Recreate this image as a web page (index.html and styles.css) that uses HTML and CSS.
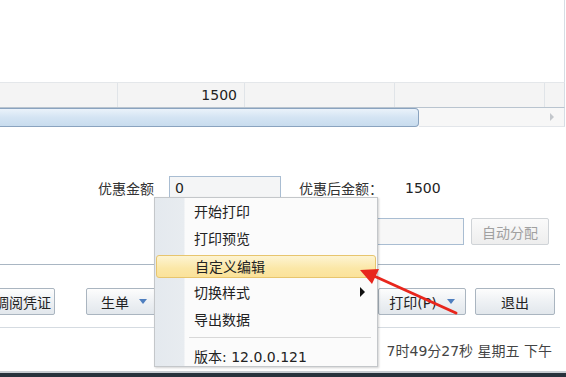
FILE: index.html
```html
<!DOCTYPE html>
<html>
<head>
<meta charset="utf-8">
<link rel="stylesheet" href="styles.css">
</head>
<body>
<div class="page">
  <div class="grid"></div>
  <div class="summary">
    <div class="cell c1"></div>
    <div class="cell c2">1500</div>
    <div class="cell c3"></div>
    <div class="cell c4"></div>
    <div class="cell c5"></div>
  </div>
  <div class="hscroll">
    <div class="thumb"></div>
    <div class="track"><span class="sarrow"></span></div>
  </div>

  <div class="form">
    <div class="frow r1">
      <span class="lbl">优惠金额</span>
      <div class="inp inp1">0</div>
      <span class="lbl2">优惠后金额：</span>
      <span class="val">1500</span>
    </div>
    <div class="frow r2">
      <div class="inp inp2"></div>
      <div class="btn auto">自动分配</div>
    </div>
  </div>

  <div class="sep1"></div>

  <div class="btnrow">
    <div class="btn b-view">调阅凭证</div>
    <div class="btn b-gen">生单<span class="dd"></span></div>
    <div class="btn b-print">打印(P)<span class="dd"></span></div>
    <div class="btn b-exit">退出</div>
  </div>

  <div class="sep2"></div>

  <div class="status">7时49分27秒 星期五 下午</div>

  <div class="taskbar"></div>

  <div class="menu">
    <div class="mitem">开始打印</div>
    <div class="mitem">打印预览</div>
    <div class="mitem hl">自定义编辑</div>
    <div class="mitem sub">切换样式<span class="subarrow"></span></div>
    <div class="mitem">导出数据</div>
    <div class="msep"></div>
    <div class="mitem">版本: 12.0.0.121</div>
  </div>

  <svg class="arrow" width="566" height="377" viewBox="0 0 566 377">
    <line x1="456" y1="313" x2="374" y2="276" stroke="#e8261c" stroke-width="3" stroke-linecap="round"/>
    <polygon points="360,270 379,269 372,284" fill="#e8261c"/>
  </svg>
</div>
</body>
</html>
```

FILE: styles.css
```css
* { box-sizing: border-box; }
html, body { margin: 0; padding: 0; }
body {
  width: 566px;
  height: 377px;
  overflow: hidden;
  background: #fff;
  font-family: "DejaVu Sans", "Noto Sans CJK SC", sans-serif;
  font-size: 14px;
  color: #222;
}
.page {
  position: relative;
  width: 566px;
  height: 377px;
  display: flex;
  flex-direction: column;
}
.grid {
  height: 82px;
  width: 565px;
  border-right: 1px solid #d6dde4;
  flex: none;
}
.summary {
  display: flex;
  height: 26px;
  width: 565px;
  background: #f4f4f4;
  border-top: 1px solid #e4e7ea;
  border-bottom: 1px solid #b9c4cf;
  border-right: 1px solid #d6dde4;
  flex: none;
}
.cell {
  border-right: 1px solid #e0e4e8;
  height: 100%;
  display: flex;
  align-items: center;
  justify-content: flex-end;
  padding-right: 7px;
  color: #222;
}
.c1 { width: 118px; }
.c2 { width: 127px; }
.c3 { width: 150px; }
.c4 { width: 150px; }
.c5 { flex: 1; border-right: none; }
.hscroll {
  display: flex;
  height: 20px;
  width: 565px;
  flex: none;
}
.thumb {
  width: 419px;
  height: 19px;
  background: linear-gradient(#eaf2fa, #d4e4f3 50%, #c8dcee);
  border: 1px solid #8aa3bf;
  border-left: none;
  border-radius: 0 4px 4px 0;
}
.track {
  flex: 1;
  height: 19px;
  background: #f7f7f7;
  border-bottom: 1px solid #e3e6ea;
  border-right: 1px solid #d6dde4;
  display: flex;
  justify-content: flex-end;
  align-items: center;
  padding-right: 10px;
}
.sarrow {
  width: 0; height: 0;
  border-left: 4px solid #c3c7cc;
  border-top: 4px solid transparent;
  border-bottom: 4px solid transparent;
}
.form {
  padding-top: 48px;
  flex: none;
}
.frow {
  display: flex;
  align-items: center;
}
.r1 { height: 24px; }
.lbl {
  margin-left: 98px;
  width: 62px;
  color: #333;
}
.inp {
  border: 1px solid #a9bdd2;
  background: #f4f5f6;
  height: 24px;
  display: flex;
  align-items: center;
  padding-left: 5px;
}
.inp1 {
  margin-left: 9px;
  width: 112px;
}
.lbl2 { margin-left: 18px; color: #333; }
.val { margin-left: 22px; }
.r2 { margin-top: 18px; height: 27px; }
.inp2 {
  margin-left: 300px;
  width: 164px;
  height: 27px;
  background: #f7f7f7;
}
.btn {
  height: 27px;
  border: 1px solid #aab5c0;
  border-radius: 2px;
  background: linear-gradient(#fdfdfd, #eef1f4 50%, #e2e7ec);
  display: flex;
  align-items: center;
  justify-content: center;
  color: #222;
  flex: none;
}
.auto {
  margin-left: 7px;
  width: 78px;
  color: #a0a0a0;
  border-color: #cfd3d7;
  background: linear-gradient(#fafafa, #eeeeee);
}
.sep1 {
  margin-top: 19px;
  height: 1px;
  width: 560px;
  background: #a9b6c3;
  flex: none;
}
.btnrow {
  display: flex;
  align-items: center;
  margin-top: 23px;
  height: 27px;
  padding-right: 11px;
  flex: none;
}
.b-view {
  width: 80px;
  margin-left: -25px;
  justify-content: flex-end;
  padding-right: 3px;
}
.b-gen { width: 76px; margin-left: 31px; }
.b-print { width: 88px; margin-left: auto; }
.b-exit { width: 80px; margin-left: 9px; }
.dd {
  display: inline-block;
  width: 0; height: 0;
  margin-left: 10px;
  border-top: 5px solid #4f7fbf;
  border-left: 4px solid transparent;
  border-right: 4px solid transparent;
}
.sep2 {
  margin-top: 12px;
  height: 1px;
  width: 560px;
  background: #d5dbe1;
  flex: none;
}
.status {
  height: 43px;
  display: flex;
  align-items: center;
  justify-content: flex-end;
  padding-right: 14px;
  color: #444;
  flex: none;
}
.taskbar {
  flex: 1;
  border-top: 2px solid #c7ccd1;
  background: #27323c;
}
.menu {
  position: absolute;
  left: 154px;
  top: 197px;
  width: 224px;
  height: 170px;
  background: linear-gradient(to right, #e4e9ee 0, #e8ecf0 29px, #fbfbfb 30px, #fbfbfb 100%);
  border: 1px solid #c4c7ca;
  box-shadow: 1px 1px 2px rgba(0,0,0,0.18);
}
.mitem {
  height: 27px;
  display: flex;
  align-items: center;
  padding-left: 39px;
  padding-bottom: 2px;
  color: #222;
  position: relative;
}
.mitem.hl {
  margin: 3px 1px 1px 1px;
  height: 23px;
  padding-left: 38px;
  padding-bottom: 1px;
  background: linear-gradient(#fdf4d2, #fbe7a6 60%, #fbe29a);
  border: 1px solid #e7c56e;
  border-radius: 3px;
}
.subarrow {
  position: absolute;
  right: 12px;
  top: 8px;
  width: 0; height: 0;
  border-left: 5px solid #111;
  border-top: 5px solid transparent;
  border-bottom: 5px solid transparent;
}
.msep {
  height: 1px;
  margin: 4px 6px 5px 34px;
  background: #d8d8d8;
}
.arrow {
  position: absolute;
  left: 0;
  top: 0;
  pointer-events: none;
}
```
